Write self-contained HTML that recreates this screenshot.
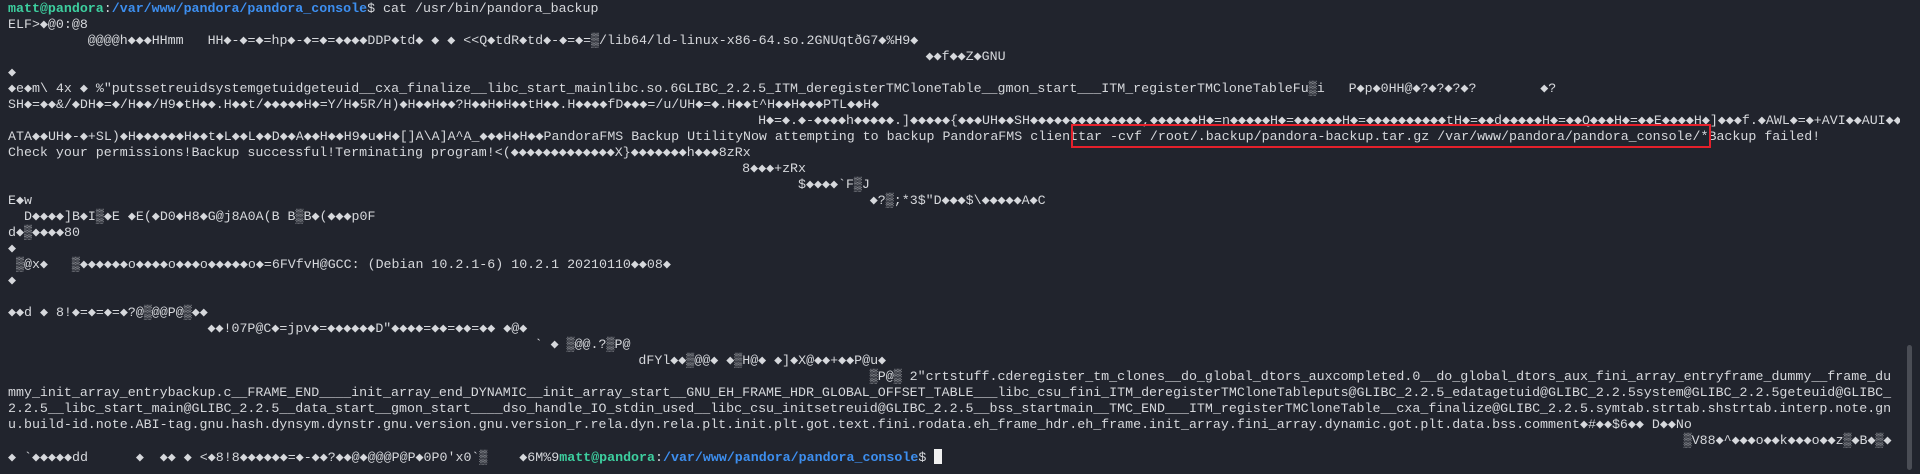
<!DOCTYPE html>
<html><head><meta charset="utf-8">
<style>
html,body{margin:0;padding:0;background:#21242d;width:1920px;height:474px;overflow:hidden;}
pre{position:absolute;left:8px;top:1px;margin:0;font-family:"Liberation Mono","DejaVu Sans Mono",monospace;font-size:13.3px;line-height:16px;color:#d6d8dc;white-space:pre;width:1892px;overflow:hidden;}
.g{color:#3dcf9f;font-weight:bold}
.b{color:#3d8ff0;font-weight:bold}
.box{position:absolute;left:1071px;top:124px;width:636px;height:20px;border:2px solid #e5202b;}
.cur{display:inline-block;width:8px;height:15px;background:#f0f0f0;vertical-align:-3px;}
.sb{position:absolute;left:1907px;top:345px;width:5px;height:125px;background:#4a4d55;border-radius:3px;}
</style></head><body>
<pre><span class="g">matt@pandora</span>:<span class="b">/var/www/pandora/pandora_console</span>$ cat /usr/bin/pandora_backup
ELF&gt;◆@0:@8
          @@@@h◆◆◆HHmm   HH◆-◆=◆=hp◆-◆=◆=◆◆◆◆DDP◆td◆ ◆ ◆ &lt;&lt;Q◆tdR◆td◆-◆=◆=▒/lib64/ld-linux-x86-64.so.2GNUqtðG7◆%H9◆
                                                                                                                   ◆◆f◆◆Z◆GNU
◆
◆e◆m\ 4x ◆ %"putssetreuidsystemgetuidgeteuid__cxa_finalize__libc_start_mainlibc.so.6GLIBC_2.2.5_ITM_deregisterTMCloneTable__gmon_start___ITM_registerTMCloneTableFu▒i   P◆p◆0HH@◆?◆?◆?◆?        ◆?
SH◆=◆◆&amp;/◆DH◆=◆/H◆◆/H9◆tH◆◆.H◆◆t/◆◆◆◆◆H◆=Y/H◆5R/H)◆H◆◆H◆◆?H◆◆H◆H◆◆tH◆◆.H◆◆◆◆fD◆◆◆=/u/UH◆=◆.H◆◆t^H◆◆H◆◆◆PTL◆◆H◆
                                                                                              H◆=◆.◆-◆◆◆◆h◆◆◆◆◆.]◆◆◆◆◆{◆◆◆UH◆◆SH◆◆◆◆◆◆◆◆◆◆◆◆◆◆,◆◆◆◆◆◆H◆=n◆◆◆◆◆H◆=◆◆◆◆◆◆H◆=◆◆◆◆◆◆◆◆◆◆tH◆=◆◆d◆◆◆◆◆H◆=◆◆Q◆◆◆H◆=◆◆E◆◆◆◆H◆]◆◆◆f.◆AWL◆=◆+AVI◆◆AUI◆◆
ATA◆◆UH◆-◆+SL)◆H◆◆◆◆◆◆H◆◆t◆L◆◆L◆◆D◆◆A◆◆H◆◆H9◆u◆H◆[]A\A]A^A_◆◆◆H◆H◆◆PandoraFMS Backup UtilityNow attempting to backup PandoraFMS clienttar -cvf /root/.backup/pandora-backup.tar.gz /var/www/pandora/pandora_console/*Backup failed!
Check your permissions!Backup successful!Terminating program!&lt;(◆◆◆◆◆◆◆◆◆◆◆◆◆X}◆◆◆◆◆◆◆h◆◆◆8zRx
                                                                                            8◆◆◆+zRx
                                                                                                   $◆◆◆◆`F▒J
E◆w                                                                                                         ◆?▒;*3$"D◆◆◆$\◆◆◆◆◆A◆C
  D◆◆◆◆]B◆I▒◆E ◆E(◆D0◆H8◆G@j8A0A(B B▒B◆(◆◆◆p0F
d◆▒◆◆◆◆80
◆
 ▒@x◆   ▒◆◆◆◆◆◆o◆◆◆◆o◆◆◆o◆◆◆◆◆o◆=6FVfvH@GCC: (Debian 10.2.1-6) 10.2.1 20210110◆◆08◆
◆

◆◆d ◆ 8!◆=◆=◆=◆?@▒@@P@▒◆◆
                         ◆◆!07P@C◆=jpv◆=◆◆◆◆◆◆D"◆◆◆◆=◆◆=◆◆=◆◆ ◆@◆
                                                                  ` ◆ ▒@@.?▒P@
                                                                               dFYl◆◆▒@@◆ ◆▒H@◆ ◆]◆X@◆◆+◆◆P@u◆
                                                                                                            ▒P@▒ 2"crtstuff.cderegister_tm_clones__do_global_dtors_auxcompleted.0__do_global_dtors_aux_fini_array_entryframe_dummy__frame_du
mmy_init_array_entrybackup.c__FRAME_END____init_array_end_DYNAMIC__init_array_start__GNU_EH_FRAME_HDR_GLOBAL_OFFSET_TABLE___libc_csu_fini_ITM_deregisterTMCloneTableputs@GLIBC_2.2.5_edatagetuid@GLIBC_2.2.5system@GLIBC_2.2.5geteuid@GLIBC_
2.2.5__libc_start_main@GLIBC_2.2.5__data_start__gmon_start____dso_handle_IO_stdin_used__libc_csu_initsetreuid@GLIBC_2.2.5__bss_startmain__TMC_END___ITM_registerTMCloneTable__cxa_finalize@GLIBC_2.2.5.symtab.strtab.shstrtab.interp.note.gn
u.build-id.note.ABI-tag.gnu.hash.dynsym.dynstr.gnu.version.gnu.version_r.rela.dyn.rela.plt.init.plt.got.text.fini.rodata.eh_frame_hdr.eh_frame.init_array.fini_array.dynamic.got.plt.data.bss.comment◆#◆◆$6◆◆ D◆◆No
                                                                                                                                                                                                                  ▒V88◆^◆◆◆o◆◆k◆◆◆o◆◆z▒◆B◆▒◆
◆ `◆◆◆◆◆dd      ◆  ◆◆ ◆ &lt;◆8!8◆◆◆◆◆◆=◆-◆◆?◆◆@◆@@@P@P◆0P0'x0`▒    ◆6M%9<span class="g">matt@pandora</span>:<span class="b">/var/www/pandora/pandora_console</span>$ <span class="cur"></span></pre>
<div class="box"></div>
<div class="sb"></div>
</body></html>
